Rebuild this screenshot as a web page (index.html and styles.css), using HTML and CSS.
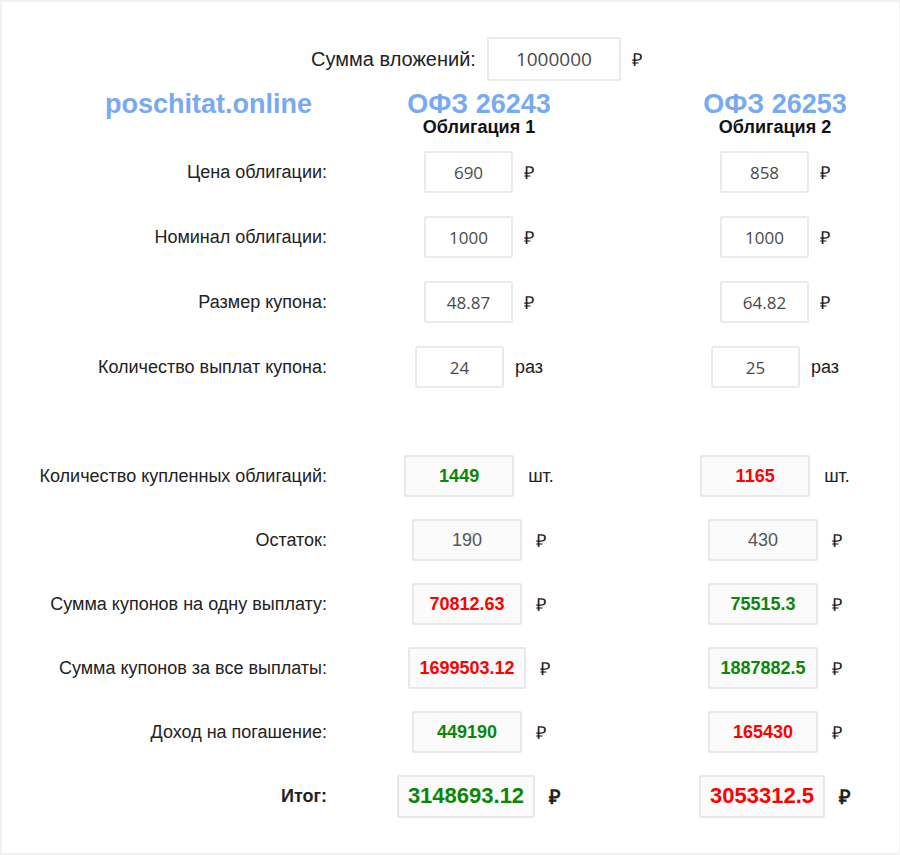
FILE: index.html
```html
<!DOCTYPE html>
<html lang="ru">
<head>
<meta charset="utf-8">
<title>Сравнение облигаций</title>
<link rel="stylesheet" href="styles.css">
</head>
<body>
<div class="page">
  <div class="invest">
    <label class="invest-label" for="sum">Сумма вложений:</label>
    <input class="invest-input" id="sum" value="1000000">
    <span class="unit">₽</span>
  </div>

  <div class="titles">
    <div class="logo">poschitat.online</div>
    <div class="bond-title">
      <div class="bond-code">ОФЗ 26243</div>
      <div class="bond-name">Облигация 1</div>
    </div>
    <div class="bond-title second">
      <div class="bond-code">ОФЗ 26253</div>
      <div class="bond-name">Облигация 2</div>
    </div>
  </div>

  <div class="grid params">
    <div class="label">Цена облигации:</div>
    <div class="cell"><input class="field" value="690"><span class="unit">₽</span></div>
    <div class="cell second"><input class="field" value="858"><span class="unit">₽</span></div>

    <div class="label">Номинал облигации:</div>
    <div class="cell"><input class="field" value="1000"><span class="unit">₽</span></div>
    <div class="cell second"><input class="field" value="1000"><span class="unit">₽</span></div>

    <div class="label">Размер купона:</div>
    <div class="cell"><input class="field" value="48.87"><span class="unit">₽</span></div>
    <div class="cell second"><input class="field" value="64.82"><span class="unit">₽</span></div>

    <div class="label">Количество выплат купона:</div>
    <div class="cell"><input class="field" value="24"><span class="unit">раз</span></div>
    <div class="cell second"><input class="field" value="25"><span class="unit">раз</span></div>
  </div>

  <div class="grid results">
    <div class="label">Количество купленных облигаций:</div>
    <div class="cell"><div class="result good">1449</div><span class="unit wide">шт.</span></div>
    <div class="cell second"><div class="result bad">1165</div><span class="unit wide">шт.</span></div>

    <div class="label">Остаток:</div>
    <div class="cell"><div class="result plain">190</div><span class="unit wide">₽</span></div>
    <div class="cell second"><div class="result plain">430</div><span class="unit wide">₽</span></div>

    <div class="label">Сумма купонов на одну выплату:</div>
    <div class="cell"><div class="result bad">70812.63</div><span class="unit wide">₽</span></div>
    <div class="cell second"><div class="result good">75515.3</div><span class="unit wide">₽</span></div>

    <div class="label">Сумма купонов за все выплаты:</div>
    <div class="cell"><div class="result bad">1699503.12</div><span class="unit wide">₽</span></div>
    <div class="cell second"><div class="result good">1887882.5</div><span class="unit wide">₽</span></div>

    <div class="label">Доход на погашение:</div>
    <div class="cell"><div class="result good">449190</div><span class="unit wide">₽</span></div>
    <div class="cell second"><div class="result bad">165430</div><span class="unit wide">₽</span></div>

    <div class="label total-label">Итог:</div>
    <div class="cell"><div class="result total good">3148693.12</div><span class="unit wide strong">₽</span></div>
    <div class="cell second"><div class="result total bad">3053312.5</div><span class="unit wide strong">₽</span></div>
  </div>
</div>
</body>
</html>
```

FILE: styles.css
```css
* {
  box-sizing: border-box;
}

body {
  margin: 0;
  background: #fff;
  font-family: "Liberation Sans", Arial, sans-serif;
  color: #222;
}

.page {
  width: 900px;
  height: 855px;
  border: 2px solid #f2f2f2;
  border-right-width: 1px;
  overflow: hidden;
}

/* investment amount */
.invest {
  display: flex;
  align-items: center;
  justify-content: center;
  padding: 35px 0 0 52px;
}

.invest-label {
  font-size: 20px;
  margin-right: 11px;
}

.invest-input {
  width: 134px;
  height: 44px;
  border: 2px solid #ebebeb;
  border-radius: 2px;
  text-align: center;
  font-family: "Open Sans", "Noto Sans", sans-serif;
  font-size: 19px;
  color: #4a4a4a;
  background: #fff;
  outline: none;
}

.invest .unit {
  margin-left: 11px;
}

/* three columns: labels, bond 1, bond 2 */
.titles,
.grid {
  display: grid;
  grid-template-columns: 377px 200px 296px;
}

.second {
  padding-left: 96px;
}

.titles {
  margin-top: 11px;
}

.logo {
  font-size: 27px;
  font-weight: bold;
  color: #78a9f3;
  text-align: right;
  padding-right: 67px;
  line-height: 24px;
}

.bond-title {
  text-align: center;
}

.bond-code {
  font-size: 27px;
  font-weight: bold;
  color: #78a9f3;
  line-height: 24px;
}

.bond-name {
  font-size: 18px;
  font-weight: bold;
  color: #111;
  line-height: 22px;
}

/* rows */
.grid {
  grid-auto-rows: 42px;
}

.params {
  margin-top: 13px;
  row-gap: 23px;
}

.results {
  margin-top: 67px;
  row-gap: 22px;
}

.label {
  display: flex;
  align-items: center;
  justify-content: flex-end;
  padding-right: 52px;
  font-size: 18px;
  color: #222;
  white-space: nowrap;
}

.total-label {
  font-weight: bold;
  font-size: 18px;
}

.cell {
  display: flex;
  align-items: center;
  justify-content: center;
}

.field {
  width: 89px;
  height: 42px;
  border: 2px solid #ebebeb;
  border-radius: 2px;
  text-align: center;
  font-family: "Open Sans", "Noto Sans", sans-serif;
  font-size: 17px;
  color: #4a4a4a;
  background: #fff;
  outline: none;
  padding: 0;
}

.unit {
  font-size: 18px;
  color: #222;
  margin-left: 11px;
}

.unit.wide {
  margin-left: 14px;
}

.unit.strong {
  font-weight: bold;
  font-size: 20px;
}

.result {
  min-width: 110px;
  height: 42px;
  padding: 0 9px;
  border: 2px solid #e8e8e8;
  border-radius: 2px;
  background: #fbfbfb;
  display: flex;
  align-items: center;
  justify-content: center;
  font-size: 18px;
  font-weight: bold;
}

.result.plain {
  font-weight: normal;
  color: #555;
}

.result.good {
  color: #0a860a;
}

.result.bad {
  color: #ff0000;
}

.result.total {
  height: 43px;
  font-size: 22px;
}
```
